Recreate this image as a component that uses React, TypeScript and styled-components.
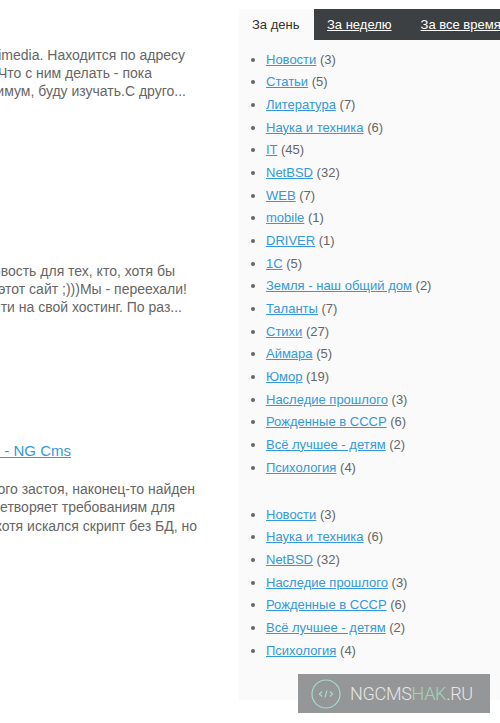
import { createGlobalStyle, styled } from "styled-components";

const topics: [string, number][] = [
  ["Новости", 3],
  ["Статьи", 5],
  ["Литература", 7],
  ["Наука и техника", 6],
  ["IT", 45],
  ["NetBSD", 32],
  ["WEB", 7],
  ["mobile", 1],
  ["DRIVER", 1],
  ["1C", 5],
  ["Земля - наш общий дом", 2],
  ["Таланты", 7],
  ["Стихи", 27],
  ["Аймара", 5],
  ["Юмор", 19],
  ["Наследие прошлого", 3],
  ["Рожденные в СССР", 6],
  ["Всё лучшее - детям", 2],
  ["Психология", 4],
];

const favourites: [string, number][] = [
  ["Новости", 3],
  ["Наука и техника", 6],
  ["NetBSD", 32],
  ["Наследие прошлого", 3],
  ["Рожденные в СССР", 6],
  ["Всё лучшее - детям", 2],
  ["Психология", 4],
];

const TopicList = ({ items }: { items: [string, number][] }) => (
  <List>
    {items.map(([name, count]) => (
      <Item key={name}>
        <TopicLink href="#">{name}</TopicLink> ({count})
      </Item>
    ))}
  </List>
);

export default function App() {
  return (
    <>
      <GlobalStyle />
      <Page>
        <Content>
          <Teaser $top={46}>
            <Line $end={185}>multimedia. Находится по адресу</Line>
            <Line $end={152}>Что с ним делать - пока</Line>
            <Line $end={186}>минимум, буду изучать.С друго...</Line>
          </Teaser>
          <Teaser $top={161}>
            <Line $end={175}>новость для тех, кто, хотя бы</Line>
            <Line $end={187}>этот сайт ;)))Мы - переехали!</Line>
            <Line $end={182}>уйти на свой хостинг. По раз...</Line>
          </Teaser>
          <Heading href="#">Скрипты - NG Cms</Heading>
          <Teaser $top={20}>
            <Line $end={195}>долгого застоя, наконец-то найден</Line>
            <Line $end={175}>удовлетворяет требованиям для</Line>
            <Line $end={197}>хотя искался скрипт без БД, но</Line>
          </Teaser>
        </Content>
        <Sidebar>
          <Tabs>
            <ActiveTab>За день</ActiveTab>
            <Tab href="#">За неделю</Tab>
            <Tab href="#">За все время</Tab>
          </Tabs>
          <TopicList items={topics} />
          <Spacer />
          <TopicList items={favourites} />
        </Sidebar>
      </Page>
      <Badge>
        <svg width="30" height="30" viewBox="0 0 30 30" fill="none" stroke="#a5dcc8">
          <circle cx="15" cy="15" r="14" strokeWidth="1.2" />
          <path d="M11 12.5 8.5 15l2.5 2.5M19 12.5l2.5 2.5-2.5 2.5M16 11.5 14 18.5" strokeWidth="1.2" />
        </svg>
        <BadgeText>
          NGCMS<BadgeAccent>HAK</BadgeAccent>.RU
        </BadgeText>
      </Badge>
    </>
  );
}

const GlobalStyle = createGlobalStyle`
  html, body {
    margin: 0;
    background: #fff;
  }
  body {
    font-family: "Liberation Sans", Arial, sans-serif;
    font-size: 14px;
    color: #666;
    overflow: hidden;
  }
`;

const Page = styled.div`
  display: flex;
  width: 500px;
  height: 723px;
  overflow: hidden;
`;

const Content = styled.main`
  width: 239px;
  flex: none;
  overflow: hidden;
`;

const Teaser = styled.p<{ $top: number }>`
  margin: ${(p) => p.$top}px 0 0;
`;

const Line = styled.span<{ $end: number }>`
  display: flex;
  justify-content: flex-end;
  width: ${(p) => p.$end}px;
  height: 18.2px;
  line-height: 18.2px;
  font-size: 14px;
  white-space: nowrap;
  overflow: hidden;
`;

const Heading = styled.a`
  display: flex;
  justify-content: flex-end;
  width: 71px;
  margin-top: 126px;
  font-size: 15px;
  line-height: 18px;
  color: #3498db;
  white-space: nowrap;
`;

const Sidebar = styled.aside`
  width: 261px;
  height: 691px;
  margin-top: 9px;
  background: #fafafa;
`;

const Tabs = styled.nav`
  display: flex;
  height: 31px;
  background: #3c4043;
  font-size: 13px;
`;

const ActiveTab = styled.span`
  display: flex;
  align-items: center;
  width: 75px;
  flex: none;
  box-sizing: border-box;
  padding-left: 13px;
  background: #fafafa;
  color: #333;
  white-space: nowrap;
`;

const Tab = styled.a`
  display: flex;
  align-items: center;
  padding: 0 16px 0 13px;
  color: #fff;
  white-space: nowrap;
`;

const List = styled.ul`
  margin: 8.5px 0 0;
  padding: 0 0 0 27px;
  font-size: 13px;
  line-height: 22.67px;
`;

const Item = styled.li`
  color: #666;
  white-space: nowrap;
`;

const TopicLink = styled.a`
  color: #3498db;
`;

const Spacer = styled.div`
  height: 16px;
`;

const Badge = styled.div`
  position: absolute;
  left: 298px;
  top: 674px;
  display: flex;
  align-items: center;
  gap: 9px;
  width: 192px;
  height: 39px;
  padding-left: 13px;
  box-sizing: border-box;
  background: #949698;
`;

const BadgeText = styled.span`
  font-family: Roboto, sans-serif;
  font-weight: 300;
  font-size: 18px;
  letter-spacing: -0.3px;
  color: #e6e6e6;
`;

const BadgeAccent = styled.span`
  color: #a0d6b4;
`;
